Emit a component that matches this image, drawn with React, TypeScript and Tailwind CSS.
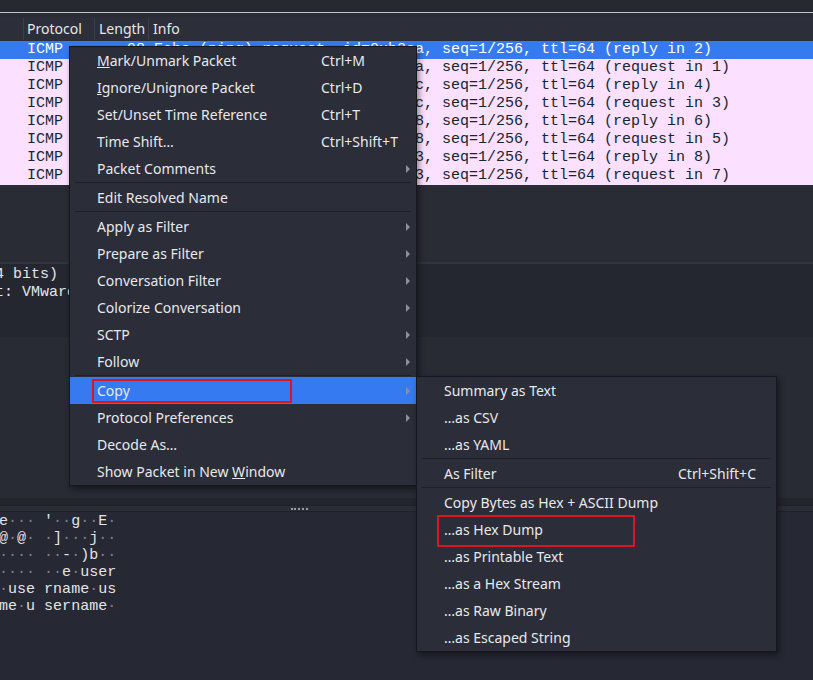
import React from 'react';

type Row = { info: string; selected?: boolean };

const rows: Row[] = [
  { info: 'Echo (ping) request  id=0xb3ea, seq=1/256, ttl=64 (reply in 2)', selected: true },
  { info: 'Echo (ping) reply    id=0xb3ea, seq=1/256, ttl=64 (request in 1)' },
  { info: 'Echo (ping) request  id=0xb5fc, seq=1/256, ttl=64 (reply in 4)' },
  { info: 'Echo (ping) reply    id=0xb5fc, seq=1/256, ttl=64 (request in 3)' },
  { info: 'Echo (ping) request  id=0xb7f8, seq=1/256, ttl=64 (reply in 6)' },
  { info: 'Echo (ping) reply    id=0xb7f8, seq=1/256, ttl=64 (request in 5)' },
  { info: 'Echo (ping) request  id=0xba03, seq=1/256, ttl=64 (reply in 8)' },
  { info: 'Echo (ping) reply    id=0xba03, seq=1/256, ttl=64 (request in 7)' },
];

const ascii = [
  'e··· \'··g··E·',
  '@·@· ·]···j··',
  '···· ··-·)b··',
  '···· ··e·user',
  '·use rname·us',
  'me·u sername·',
];

type Item =
  | { sep: true }
  | { label: React.ReactNode; shortcut?: string; sub?: boolean; active?: boolean; box?: string; sep?: false };

const mainMenu: Item[] = [
  { label: <><span className="underline">M</span>ark/Unmark Packet</>, shortcut: 'Ctrl+M' },
  { label: <><span className="underline">I</span>gnore/Unignore Packet</>, shortcut: 'Ctrl+D' },
  { label: 'Set/Unset Time Reference', shortcut: 'Ctrl+T' },
  { label: 'Time Shift…', shortcut: 'Ctrl+Shift+T' },
  { label: 'Packet Comments', sub: true },
  { sep: true },
  { label: 'Edit Resolved Name' },
  { sep: true },
  { label: 'Apply as Filter', sub: true },
  { label: 'Prepare as Filter', sub: true },
  { label: 'Conversation Filter', sub: true },
  { label: 'Colorize Conversation', sub: true },
  { label: 'SCTP', sub: true },
  { label: 'Follow', sub: true },
  { sep: true },
  { label: 'Copy', sub: true, active: true, box: 'left-[22px] top-[2px] bottom-[1px] w-[200px]' },
  { label: 'Protocol Preferences', sub: true },
  { label: 'Decode As…' },
  { label: <>Show Packet in New <span className="underline">W</span>indow</> },
];

const copyMenu: Item[] = [
  { label: 'Summary as Text' },
  { label: '…as CSV' },
  { label: '…as YAML' },
  { sep: true },
  { label: 'As Filter', shortcut: 'Ctrl+Shift+C' },
  { sep: true },
  { label: 'Copy Bytes as Hex + ASCII Dump' },
  { label: '…as Hex Dump', box: 'left-[20px] top-[-1px] bottom-[-4px] w-[198px]' },
  { label: '…as Printable Text' },
  { label: '…as a Hex Stream' },
  { label: '…as Raw Binary' },
  { label: '…as Escaped String' },
];

function Arrow() {
  return (
    <svg width="4" height="8" viewBox="0 0 4 8" className="shrink-0">
      <path d="M0 0 L4 4 L0 8 Z" fill="#8d9099" />
    </svg>
  );
}

function Menu({ items, shortcutX }: { items: Item[]; shortcutX: string }) {
  return (
    <div className="flex flex-col">
      {items.map((it, i) =>
        it.sep ? (
          <div key={i} className="h-[2px] px-[5px] flex items-start">
            <div className="h-px w-full bg-[#1d1f26]" />
          </div>
        ) : (
          <div
            key={i}
            className={`relative h-[27px] flex items-center pl-[27px] pr-[6px] ${it.active ? 'bg-[#357af0]' : ''}`}
          >
            {it.box && <div className={`absolute ${it.box} border-2 border-[#e0141e]`} />}
            <span className="flex-1 whitespace-nowrap">{it.label}</span>
            {it.shortcut && <span className={`absolute ${shortcutX} whitespace-nowrap`}>{it.shortcut}</span>}
            {it.sub && <Arrow />}
          </div>
        ),
      )}
    </div>
  );
}

export default function App() {
  return (
    <div className="relative w-[813px] h-[680px] overflow-hidden bg-[#292b35] text-[#e6e7ea] font-['Noto_Sans',sans-serif] text-[14px]">
      {/* toolbar edge */}
      <div className="h-[12px] bg-[#262832]" />
      <div className="h-px bg-[#c4c5c9]" />
      <div className="h-[5px] bg-[#2a2c36]" />

      {/* packet list */}
      <div className="h-[22px] flex bg-[#2c2f3a] leading-[22px]">
        <div className="w-[24px] border-r border-[#3c3f4a]" />
        <div className="w-[71px] pl-[3px] border-r border-[#3c3f4a]">Protocol</div>
        <div className="w-[54px] pl-[4px] border-r border-[#3c3f4a]">Length</div>
        <div className="flex-1 pl-[4px]">Info</div>
      </div>
      <div className="h-[1px] bg-[#2a2c36]" />
      <div className="font-['Liberation_Mono',monospace] text-[15px] leading-[18px]">
        {rows.map((r, i) => (
          <div
            key={i}
            className={`h-[18px] flex whitespace-pre ${r.selected ? 'bg-[#357af0] text-white' : 'bg-[#fce0ff] text-[#12272e]'}`}
          >
            <div className="w-[24px]" />
            <div className="w-[71px] pl-[3px]">ICMP</div>
            <div className="w-[54px] pr-[4px] text-right">98</div>
            <div className="flex-1 pl-[5px] overflow-hidden">{r.info}</div>
          </div>
        ))}
      </div>
      <div className="h-[77px]" />

      {/* splitter */}
      <div className="h-[2px] bg-[#31333d]" />

      {/* packet details */}
      <div className="h-[73px] bg-[#252730] font-['Liberation_Mono',monospace] text-[15px] leading-[18px] pt-[2px] whitespace-pre text-[#e3e4e8]">
        <div className="ml-[-5px]">4 bits)</div>
        <div className="ml-[-5px]">t: VMware_4c:5a:1e (00:0c:29:4c:5a:1e)</div>
      </div>
      <div className="h-[161px] bg-[#282a34]" />

      {/* splitter */}
      <div className="h-[8px] bg-[#23252c] border-b border-[#1e2026]" />
      <div className="relative h-[6px] bg-[#2a2c36] border-b border-[#1e2026]">
        <div className="absolute left-[291px] top-[2px] h-[2px] w-[17px] border-t-2 border-dotted border-[#9a9ca4]" />
      </div>

      {/* packet bytes */}
      <div className="h-[168px] bg-[#262833] font-['Liberation_Mono',monospace] text-[15px] leading-[17px] pt-[1px] whitespace-pre text-[#e3e4e8]">
        {ascii.map((line, i) => (
          <div key={i} className="ml-[-1px]">
            {line.split('').map((c, j) =>
              c === '·' ? (
                <span key={j} className="text-[#7d808a]">·</span>
              ) : (
                <span key={j}>{c}</span>
              ),
            )}
          </div>
        ))}
      </div>

      {/* context menu */}
      <div className="absolute left-[69px] top-[46px] w-[348px] bg-[#2b2d38] border border-[#17181d] shadow-[2px_3px_6px_rgba(0,0,0,0.45)] text-[#e8e9ec]">
        <Menu items={mainMenu} shortcutX="left-[251px]" />
      </div>

      {/* copy submenu */}
      <div className="absolute left-[416px] top-[376px] w-[361px] bg-[#2b2d38] border border-[#17181d] shadow-[2px_3px_6px_rgba(0,0,0,0.45)] text-[#e8e9ec]">
        <Menu items={copyMenu} shortcutX="left-[261px]" />
      </div>
    </div>
  );
}
